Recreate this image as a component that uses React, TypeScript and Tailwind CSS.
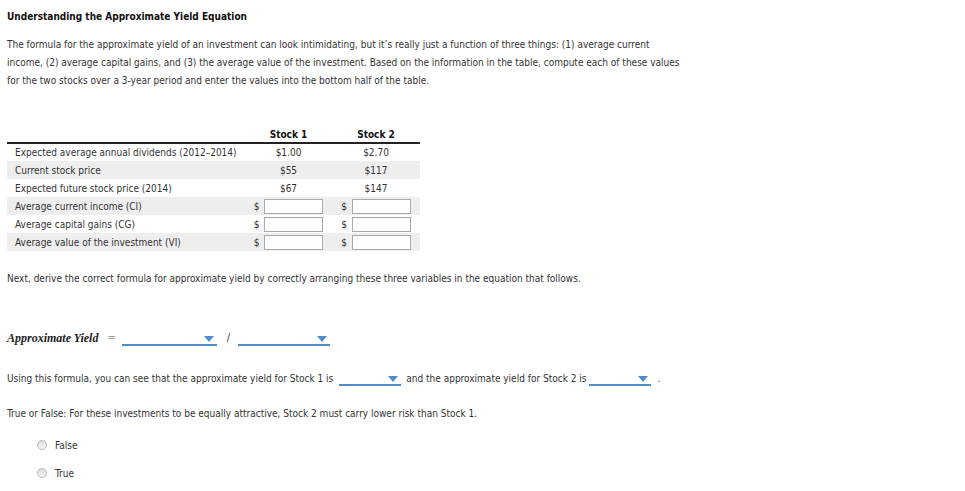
import React from "react";

const font = { fontFamily: "'DejaVu Sans Condensed', 'DejaVu Sans', sans-serif" };

function Dropdown({ w }: { w: string }) {
  return (
    <span className={`relative inline-block h-[14px] border-b-2 border-[#4f8dca] align-middle ${w}`}>
      <svg className="absolute right-[3px] top-[4px]" width="10" height="6" viewBox="0 0 10 6">
        <path d="M0 0 H10 L5 6 Z" fill="#4f8dca" />
      </svg>
    </span>
  );
}

function Money() {
  return (
    <div className="flex items-center justify-center gap-[5px]">
      <span>$</span>
      <span className="block w-[59px] h-[15px] border border-[#a9a9a9] bg-white" />
    </div>
  );
}

function Radio({ label }: { label: string }) {
  return (
    <div className="flex items-center h-[18px] pl-[30px]">
      <span className="w-[10px] h-[10px] rounded-full border border-[#b9b9b9] bg-gradient-to-b from-[#dcdcdc] to-[#f7f7f7]" />
      <span className="ml-[8px]">{label}</span>
    </div>
  );
}

const rows = [
  { label: "Expected average annual dividends (2012–2014)", a: "$1.00", b: "$2.70" },
  { label: "Current stock price", a: "$55", b: "$117" },
  { label: "Expected future stock price (2014)", a: "$67", b: "$147" },
  { label: "Average current income (CI)" },
  { label: "Average capital gains (CG)" },
  { label: "Average value of the investment (VI)" },
];

export default function App() {
  return (
    <div className="min-h-[491px] bg-white px-[7px] pt-[11px] text-[10px] text-[#333]" style={font}>
      <h1 className="font-bold text-[#111] leading-[12px] text-[10px]">Understanding the Approximate Yield Equation</h1>
      <p className="mt-[13px] leading-[18px] max-w-[680px]">
        The formula for the approximate yield of an investment can look intimidating, but it’s really just a function of three things: (1) average current income, (2) average capital gains, and (3) the average value of the investment. Based on the information in the table, compute each of these values for the two stocks over a 3-year period and enter the values into the bottom half of the table.
      </p>

      <table className="mt-[39px] w-[413px] border-collapse">
        <thead>
          <tr className="h-[14px] border-b-2 border-[#222]">
            <th className="w-[238px]" />
            <th className="w-[87px] font-bold text-[#111] leading-[12px] align-top">Stock 1</th>
            <th className="w-[88px] font-bold text-[#111] leading-[12px] align-top">Stock 2</th>
          </tr>
        </thead>
        <tbody>
          {rows.map((r, i) => (
            <tr key={r.label} className={`h-[18px] ${i % 2 === 1 ? "bg-[#eeeeee]" : "bg-white"}`}>
              <td className="pl-[8px] p-0">{r.label}</td>
              {r.a ? (
                <>
                  <td className="text-center p-0">{r.a}</td>
                  <td className="text-center p-0">{r.b}</td>
                </>
              ) : (
                <>
                  <td className="p-0"><Money /></td>
                  <td className="p-0"><Money /></td>
                </>
              )}
            </tr>
          ))}
        </tbody>
      </table>

      <p className="mt-[19px] leading-[18px]">
        Next, derive the correct formula for approximate yield by correctly arranging these three variables in the equation that follows.
      </p>

      <div className="mt-[41px] flex items-center h-[18px]">
        <span className="italic font-bold text-[12px] text-[#222]" style={{ fontFamily: "'Liberation Serif', serif" }}>
          Approximate Yield
        </span>
        <span className="ml-[9px] text-[#999] text-[11px]">=</span>
        <span className="ml-[6px]"><Dropdown w="w-[95px]" /></span>
        <span className="ml-[10px] text-[11px]">/</span>
        <span className="ml-[8px]"><Dropdown w="w-[92px]" /></span>
      </div>

      <div className="mt-[22px] flex items-center h-[18px]">
        <span>Using this formula, you can see that the approximate yield for Stock 1 is</span>
        <span className="ml-[6px]"><Dropdown w="w-[62px]" /></span>
        <span className="ml-[5px]">and the approximate yield for Stock 2 is</span>
        <span className="ml-[3px]"><Dropdown w="w-[62px]" /></span>
        <span className="ml-[6px]">.</span>
      </div>

      <p className="mt-[18px] leading-[18px]">
        True or False: For these investments to be equally attractive, Stock 2 must carry lower risk than Stock 1.
      </p>

      <div className="mt-[13px]">
        <Radio label="False" />
        <div className="h-[10px]" />
        <Radio label="True" />
      </div>
    </div>
  );
}
